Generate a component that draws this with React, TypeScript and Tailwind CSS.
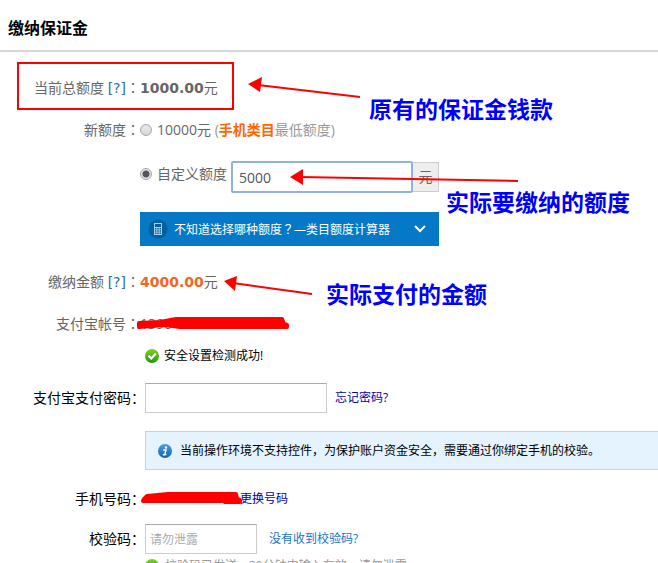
import React from 'react';

interface RowProps {
  label?: React.ReactNode;
  htmlFor?: string;
  className?: string;
  children: React.ReactNode;
}

const Colon = () => <span className="leading-none font-['Noto_Sans_CJK_TC',sans-serif]">：</span>;

// upper part of the form: grey labels, values start right after the colon
const Row: React.FC<RowProps> = ({ label, htmlFor, className = '', children }) => (
  <div className={`grid grid-cols-[140px_1fr] text-sm leading-5 text-[#666] ${className}`}>
    {label ? (
      <label htmlFor={htmlFor} className="text-right whitespace-nowrap">
        {label}
        <Colon />
      </label>
    ) : (
      <span />
    )}
    <div className="flex items-center whitespace-nowrap">{children}</div>
  </div>
);

// payment part: black labels, fields share the second column
const PayRow: React.FC<RowProps> = ({ label, htmlFor, className = '', children }) => (
  <div className={`grid grid-cols-[145px_1fr] items-center text-xs leading-5 text-black ${className}`}>
    {label ? (
      <label htmlFor={htmlFor} className="text-right text-sm leading-5 whitespace-nowrap">
        {label}：
      </label>
    ) : (
      <span />
    )}
    <div className="flex items-center whitespace-nowrap">{children}</div>
  </div>
);

const Help = () => (
  <a href="#help" className="leading-none font-['DejaVu_Sans',sans-serif] text-[#2b6ea8]">
    [?]
  </a>
);

const RadioMark = ({ id, defaultChecked }: { id: string; defaultChecked?: boolean }) => (
  <input
    type="radio"
    name="quota"
    id={id}
    defaultChecked={defaultChecked}
    className="size-3 shrink-0 appearance-none rounded-full border border-[#a6a6a6] bg-linear-to-b from-[#e9e9e9] to-[#d8d8d8] checked:bg-[radial-gradient(circle,#555_0_3px,#e6e6e6_4px)]"
  />
);

const OkIcon = () => (
  <svg viewBox="0 0 14 14" className="size-[14px] shrink-0">
    <defs>
      <linearGradient id="ok" x1="0" y1="0" x2="0" y2="1">
        <stop offset="0" stopColor="#7fd321" />
        <stop offset="1" stopColor="#23970e" />
      </linearGradient>
    </defs>
    <circle cx="7" cy="7" r="7" fill="url(#ok)" />
    <path d="M3.5 6.8 6.3 9.5 10.8 4.6" fill="none" stroke="#fff" strokeWidth="2.2" />
  </svg>
);

const InfoIcon = () => (
  <svg viewBox="0 0 14 14" className="size-[14px] shrink-0">
    <defs>
      <linearGradient id="info" x1="0" y1="0" x2="0" y2="1">
        <stop offset="0" stopColor="#45a0dc" />
        <stop offset="1" stopColor="#1463ae" />
      </linearGradient>
    </defs>
    <circle cx="7" cy="7" r="7" fill="url(#info)" />
    <circle cx="8" cy="3.5" r="1.2" fill="#fff" />
    <path d="M5.2 6H8L6.8 10.6H8.4M4.8 10.8H7" fill="none" stroke="#fff" strokeWidth="1.4" />
  </svg>
);

const CalculatorIcon = () => (
  <svg viewBox="0 0 20 20" className="size-5 shrink-0">
    <circle cx="10" cy="10" r="9.5" fill="#045f9f" />
    <path fill="#a9cfe9" fillRule="evenodd" d="M6 4h8v12H6zM7 5v3h6V5zM7 9v1.4h1.4V9zm2.3 0v1.4h1.4V9zm2.3 0v1.4H13V9zM7 11.3v1.4h1.4v-1.4zm2.3 0v1.4h1.4v-1.4zm2.3 0v1.4H13v-1.4zM7 13.6V15h1.4v-1.4zm2.3 0V15h1.4v-1.4zm2.3 0V15H13v-1.4z" />
  </svg>
);

const Note = ({ className, children }: { className: string; children: string }) => (
  <p className={`absolute text-[23px] leading-7 font-bold whitespace-nowrap text-[#0000ff] ${className}`}>{children}</p>
);

// red pen marks drawn over the form
const Marks = () => (
  <svg width="658" height="563" viewBox="0 0 658 563" className="pointer-events-none absolute top-0 left-0" fill="none" stroke="#ff0000" strokeWidth="2">
    <rect x="18" y="63" width="215" height="46" />
    <path d="M258 85 360 97M300 177 518 181M233 283 312 294" />
    <path d="M248 84 262 77 260 92ZM290 177 303 169V185ZM224 281 237 276 235 291Z" fill="#ff0000" stroke="none" />
    <path
      d="M139 323 160 322 176 319H282L284 324 287 325V327H180L165 325 139 327ZM144 499 147 496 168 494H236L237 499 240 500V502H225L224 501H143Z"
      fill="#ff0000"
      strokeWidth="4"
      strokeLinejoin="round"
    />
  </svg>
);

export default function App() {
  return (
    <div className="relative h-screen overflow-hidden bg-white font-['Open_Sans','Noto_Sans_CJK_SC',sans-serif]">
      <h1 className="border-b-2 border-[#d5d5d5] pt-4 pb-[10px] pl-2 text-base leading-6 font-bold text-black">缴纳保证金</h1>

      <form>
        <Row className="mt-[26px]" label={<>当前总额度 <Help /></>}>
          <b className="leading-none font-['DejaVu_Sans',sans-serif]">1000.00</b>元
        </Row>

        <Row className="mt-[22px]" label="新额度" htmlFor="quota-default">
          <RadioMark id="quota-default" />
          <label htmlFor="quota-default" className="ml-[5px]">
            10000元 <span className="text-[#999]">(<b className="text-[#ff6600]">手机类目</b>最低额度)</span>
          </label>
        </Row>

        <Row className="mt-[21px]">
          <div className="flex h-[26px] items-center self-start">
            <RadioMark id="quota-custom" defaultChecked />
            <label htmlFor="quota-custom" className="ml-[5px]">自定义额度</label>
          </div>
          <input
            type="text"
            aria-label="自定义额度"
            defaultValue="5000"
            className="ml-1 h-8 w-[182px] rounded-xs border-2 border-[#8db2e3] bg-white px-1.5 text-sm text-[#555] outline-none"
          />
          <span className="h-[30px] w-[26px] border border-l-0 border-[#ccc] bg-[#eee] text-center leading-7">元</span>
        </Row>

        <Row className="mt-[19px]">
          <button type="button" className="flex h-[34px] w-[299px] items-center bg-[#0578c6] pr-3 pl-2 text-xs text-white">
            <CalculatorIcon />
            <span className="ml-1.5">
              不知道选择哪种额度<span className="font-['Noto_Sans_CJK_TC',sans-serif]">？</span>—类目额度计算器
            </span>
            <svg viewBox="0 0 14 10" className="ml-auto h-[10px] w-[14px]">
              <path d="M2 2 7 7 12 2" fill="none" stroke="#fff" strokeWidth="2" />
            </svg>
          </button>
        </Row>

        <Row className="mt-[26px]" label={<>缴纳金额 <Help /></>}>
          <b className="leading-none font-['DejaVu_Sans',sans-serif] text-[#f26522]">4000.00</b>元
        </Row>

        <Row className="mt-[22px]" label="支付宝帐号">
          <span>1390</span>
        </Row>

        <PayRow className="mt-3">
          <OkIcon />
          <span className="ml-[5px]">安全设置检测成功!</span>
        </PayRow>

        <PayRow className="mt-[17px]" label="支付宝支付密码" htmlFor="pay-password">
          <input id="pay-password" type="password" className="h-[30px] w-[182px] border border-[#ccc] border-t-[#aaa] bg-white px-1" />
          <a href="#forgot" className="ml-2 text-[#0000a8]">忘记密码?</a>
        </PayRow>

        <div className="mt-[18px] ml-[145px] flex h-[39px] items-center border border-r-0 border-[#c9d0d6] bg-[#e4f3fe] pl-3 text-xs whitespace-nowrap text-black">
          <InfoIcon />
          <span className="ml-2">当前操作环境不支持控件，为保护账户资金安全，需要通过你绑定手机的校验。</span>
        </div>

        <PayRow className="mt-[19px]" label="手机号码">
          <a href="#change" className="ml-[95px] text-[#0000a8]">更换号码</a>
        </PayRow>

        <PayRow className="mt-[15px]" label="校验码" htmlFor="code">
          <input
            id="code"
            type="text"
            placeholder="请勿泄露"
            className="h-[30px] w-28 border border-[#ccc] border-t-[#aaa] bg-white px-1 text-xs placeholder:text-[#aaa]"
          />
          <a href="#no-code" className="ml-3 text-[#1a72d0]">没有收到校验码?</a>
        </PayRow>

        <PayRow className="mt-0.5">
          <OkIcon />
          <span className="ml-1.5 text-[#999]">校验码已发送，30分钟内输入有效，请勿泄露</span>
        </PayRow>
      </form>

      <Marks />
      <Note className="top-[95px] left-[369px]">原有的保证金钱款</Note>
      <Note className="top-[188px] left-[446px]">实际要缴纳的额度</Note>
      <Note className="top-[280px] left-[326px]">实际支付的金额</Note>
    </div>
  );
}
